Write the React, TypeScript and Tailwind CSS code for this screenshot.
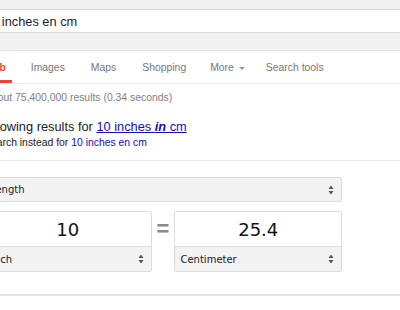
import React from 'react';

const arial = { fontFamily: '"Liberation Sans", Arial, sans-serif' };
const lucida = { fontFamily: '"DejaVu Sans", "Lucida Grande", sans-serif' };

const Stepper: React.FC = () => (
  <svg width="6" height="10" viewBox="0 0 6 10" className="shrink-0">
    <path d="M3 0.5 L5.5 4 L0.5 4 Z" fill="#555" />
    <path d="M3 9.5 L5.5 6 L0.5 6 Z" fill="#555" />
  </svg>
);

const SelectBox: React.FC<{ label: string; className?: string }> = ({ label, className }) => (
  <div
    className={`h-[25px] bg-[#f3f3f3] border border-[#dcdcdc] rounded-[2px] flex items-center justify-between pl-[5px] pr-[7px] text-[10px] text-[#222] ${className ?? ''}`}
    style={lucida}
  >
    <span>{label}</span>
    <Stepper />
  </div>
);

const UnitBox: React.FC<{ value: string; unit: string; pad: string }> = ({ value, unit, pad }) => (
  <div className="w-[168px] border border-[#dcdcdc] rounded-[2px] overflow-hidden">
    <div className="h-[34px] bg-white flex items-center justify-center text-[18px] text-[#111]" style={lucida}>
      {value}
    </div>
    <div
      className={`h-[25px] bg-[#f3f3f3] border-t border-[#dcdcdc] flex items-center justify-between ${pad} pr-[7px] text-[10px] text-[#222]`}
      style={lucida}
    >
      <span>{unit}</span>
      <Stepper />
    </div>
  </div>
);

const tabs = [
  { label: 'Images', ml: 'ml-[19px]' },
  { label: 'Maps', ml: 'ml-[26px]' },
  { label: 'Shopping', ml: 'ml-[26px]' },
];

export default function App() {
  return (
    <div className="w-[400px] h-[310px] overflow-hidden bg-white relative" style={arial}>
      {/* top search bar */}
      <div className="h-[51px] bg-[#f1f1f1] border-b border-[#e5e5e5] pt-[9px]">
        <div className="h-[24px] bg-white border-y border-[#d9d9d9] flex items-center pt-[1px]">
          <span className="-ml-[16px] text-[12.8px] text-[#222] whitespace-nowrap">10 inches en cm</span>
        </div>
      </div>

      {/* tabs */}
      <div className="h-[33px] border-b border-[#ebebeb] flex items-stretch text-[10.4px] text-[#777] whitespace-nowrap">
        <div className="-ml-[22px] px-[6px] flex items-center border-b-[3px] border-[#dd4b39] pt-[4px] font-bold text-[#dd4b39]">
          Web
        </div>
        {tabs.map(t => (
          <div key={t.label} className={`${t.ml} flex items-center pt-[1px]`}>
            {t.label}
          </div>
        ))}
        <div className="ml-[24px] flex items-center pt-[1px]">
          More
          <span className="ml-[5px] mt-[1px] w-0 h-0 border-l-[3px] border-r-[3px] border-t-[3px] border-l-transparent border-r-transparent border-t-[#999]" />
        </div>
        <div className="ml-[21px] flex items-center pt-[1px]">Search tools</div>
      </div>

      {/* result stats */}
      <div className="-ml-[15px] mt-[7px] text-[10.4px] leading-[14px] text-[#808080] whitespace-nowrap">
        About 75,400,000 results (0.34 seconds)
      </div>

      {/* spelling */}
      <div className="-ml-[16px] mt-[14px] whitespace-nowrap">
        <div className="text-[12.8px] leading-[16px] text-[#222]">
          Showing results for{' '}
          <a className="text-[#1a0dab] underline">
            10 inches <b><i>in</i></b> cm
          </a>
        </div>
        <div className="text-[10.4px] leading-[14px] text-[#222] mt-[1px]">
          Search instead for <a className="text-[#1a0dab]">10 inches en cm</a>
        </div>
      </div>

      <div className="mt-[10px] border-t border-[#ebebeb]" />

      {/* converter */}
      <div className="-ml-[16px] mt-[16px] w-[358px]">
        <SelectBox label="Length" className="pl-[4px]" />
        <div className="mt-[9px] flex items-start">
          <UnitBox value="10" unit="Inch" pad="pl-[6px]" />
          <div className="w-[23px] h-[34px] flex items-center justify-center text-[22px] font-bold text-[#888]" style={arial}>
            =
          </div>
          <UnitBox value="25.4" unit="Centimeter" pad="pl-[5px]" />
        </div>
      </div>

      <div className="mt-[22px] border-t-2 border-[#e5e5e5]" />
    </div>
  );
}
